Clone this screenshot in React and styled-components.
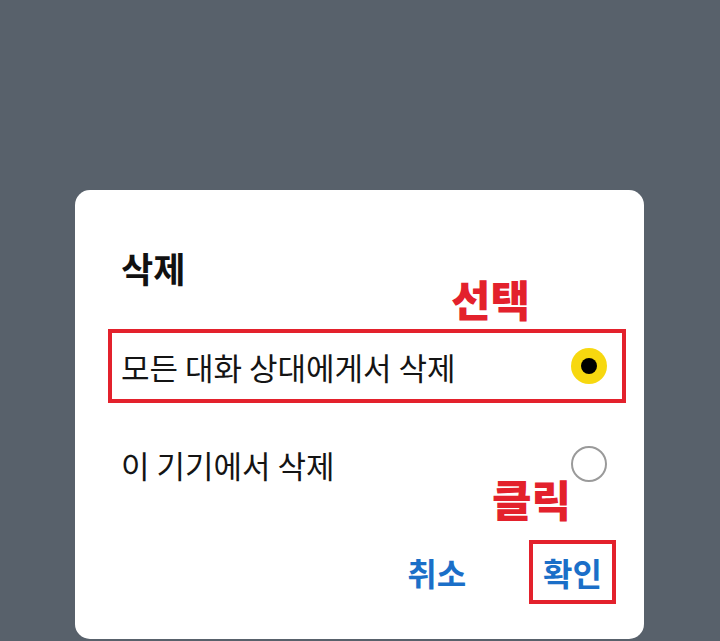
import React from 'react';
import styled, { createGlobalStyle } from 'styled-components';

const GlobalStyle = createGlobalStyle`
  html, body {
    margin: 0;
    padding: 0;
    background: #58616b;
    font-family: 'Noto Sans CJK KR', 'Noto Sans', sans-serif;
  }
`;

const Screen = styled.div`
  width: 720px;
  height: 641px;
  overflow: hidden;
  padding: 190px 0 0 75px;
  box-sizing: border-box;
`;

const Dialog = styled.div`
  position: relative;
  width: 569px;
  height: 449px;
  background: #fff;
  border-radius: 15px;
  display: flex;
  flex-direction: column;
`;

const Title = styled.h2`
  margin: 57px 0 28px 46px;
  font-size: 35px;
  line-height: 42px;
  font-weight: 700;
  color: #111;
`;

const Row = styled.div`
  height: 98px;
  display: flex;
  align-items: center;
  padding: 0 18px 0 33px;
`;

const Option = styled.label`
  flex: 1;
  height: 74px;
  box-sizing: border-box;
  display: flex;
  align-items: center;
  justify-content: space-between;
  padding: 0 15px 0 9px;
  border: 4px solid ${p => (p.$marked ? '#e3212c' : 'transparent')};
  font-size: 31px;
  color: #141414;
`;

const Radio = styled.span`
  width: 36px;
  height: 36px;
  border-radius: 50%;
  box-sizing: border-box;
  display: flex;
  align-items: center;
  justify-content: center;
  background: ${p => (p.$checked ? '#f7d80f' : 'transparent')};
  border: ${p => (p.$checked ? 'none' : '2.5px solid #9a9a9a')};

  &::after {
    content: '';
    display: ${p => (p.$checked ? 'block' : 'none')};
    width: 16px;
    height: 16px;
    border-radius: 50%;
    background: #000;
  }
`;

const Actions = styled.div`
  margin-top: 27px;
  display: flex;
  justify-content: flex-end;
  gap: 49px;
  padding-right: 28px;
`;

const Button = styled.button`
  height: 64px;
  padding: 0 10px;
  box-sizing: border-box;
  background: #fff;
  border: 4px solid ${p => (p.$marked ? '#e3212c' : 'transparent')};
  font-family: inherit;
  font-size: 32px;
  font-weight: 700;
  color: #1b6fc8;
`;

const Note = styled.span`
  position: absolute;
  left: ${p => p.$x}px;
  top: ${p => p.$y}px;
  font-family: 'Noto Sans CJK KR', sans-serif;
  font-size: 43px;
  line-height: 1;
  font-weight: 900;
  color: #e3212c;
`;

export default function App() {
  return (
    <>
      <GlobalStyle />
      <Screen>
        <Dialog>
          <Title>삭제</Title>
          <Row>
            <Option $marked>
              모든 대화 상대에게서 삭제
              <Radio $checked />
            </Option>
          </Row>
          <Row>
            <Option>
              이 기기에서 삭제
              <Radio />
            </Option>
          </Row>
          <Actions>
            <Button>취소</Button>
            <Button $marked>확인</Button>
          </Actions>
          <Note $x={376} $y={87}>선택</Note>
          <Note $x={417} $y={287}>클릭</Note>
        </Dialog>
      </Screen>
    </>
  );
}
